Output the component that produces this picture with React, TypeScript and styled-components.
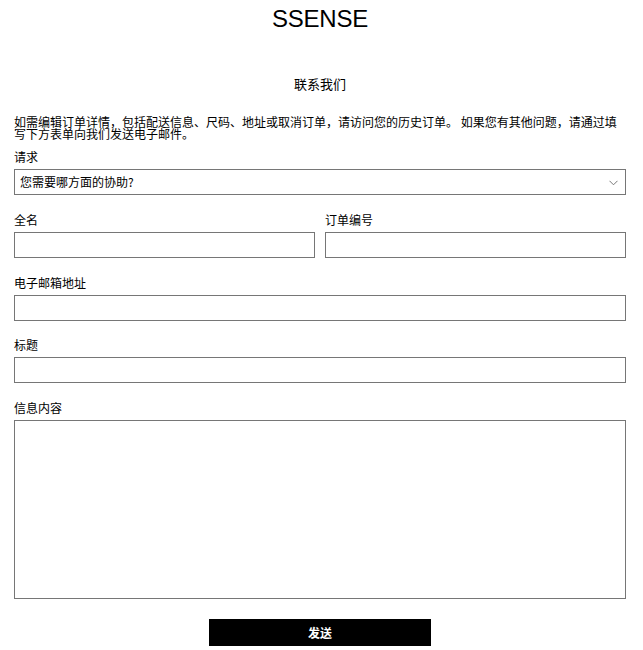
import React from "react";
import styled, { createGlobalStyle } from "styled-components";

const GlobalStyle = createGlobalStyle`
  html, body {
    margin: 0;
    padding: 0;
    background: #ffffff;
  }
  body {
    font-family: "Noto Sans CJK SC", "Liberation Sans", sans-serif;
    color: #000000;
  }
  * { box-sizing: border-box; }
`;

const Page = styled.div`
  width: 612px;
  margin-left: 14px;
  display: flex;
  flex-direction: column;
`;

const Logo = styled.h1`
  margin: 5px 0 0;
  font-family: "Liberation Sans", Arial, sans-serif;
  font-weight: 400;
  font-size: 24px;
  line-height: 28px;
  letter-spacing: -0.2px;
  text-align: center;
`;

const Title = styled.h2`
  margin: 42px 0 0;
  font-size: 13px;
  font-weight: 400;
  line-height: 18px;
  text-align: center;
`;

const Intro = styled.p`
  margin: 23px 0 0;
  font-size: 12px;
  line-height: 12px;
`;

const Form = styled.form`
  display: flex;
  flex-direction: column;
  margin-top: 10px;
`;

const Row = styled.div`
  display: grid;
  grid-template-columns: 1fr 1fr;
  column-gap: 10px;
`;

const Field = styled.div<{ $last?: boolean }>`
  display: flex;
  flex-direction: column;
  margin-bottom: ${(p) => (p.$last ? "20px" : "17.75px")};
`;

const Label = styled.label`
  font-size: 12px;
  line-height: 14px;
  margin-bottom: 5px;
`;

const boxStyles = `
  width: 100%;
  border: 1px solid #767676;
  border-radius: 0;
  background: #ffffff;
  font-family: "Noto Sans CJK SC", "Liberation Sans", sans-serif;
  font-size: 12px;
  color: #000;
  outline: none;
  margin: 0;
`;

const Input = styled.input`
  ${boxStyles}
  height: 26px;
  padding: 0 5px;
`;

const TextArea = styled.textarea`
  ${boxStyles}
  height: 179px;
  padding: 5px;
  resize: none;
  display: block;
`;

const SelectBox = styled.div`
  ${boxStyles}
  height: 26px;
  display: flex;
  align-items: center;
  justify-content: space-between;
  padding: 0 7px 0 5px;
  line-height: 14px;
`;

const Chevron = styled.svg`
  width: 9px;
  height: 6px;
  display: block;
  margin-top: 1px;
`;

const Actions = styled.div`
  display: flex;
  justify-content: center;
`;

const SendButton = styled.button`
  width: 222px;
  height: 27px;
  background: #000;
  color: #fff;
  border: none;
  border-radius: 0;
  font-family: "Noto Sans CJK SC", "Liberation Sans", sans-serif;
  font-size: 12px;
  font-weight: 700;
  cursor: pointer;
  padding: 0;
`;

export default function App() {
  return (
    <>
      <GlobalStyle />
      <Page>
        <Logo>SSENSE</Logo>
        <Title>联系我们</Title>
        <Intro>
          如需编辑订单详情，包括配送信息、尺码、地址或取消订单，请访问您的历史订单。 如果您有其他问题，请通过填写下方表单向我们发送电子邮件。
        </Intro>
        <Form onSubmit={(e) => e.preventDefault()}>
          <Field>
            <Label>请求</Label>
            <SelectBox>
              <span>您需要哪方面的协助?</span>
              <Chevron viewBox="0 0 9 6">
                <path d="M0.5 0.8 L4.5 4.8 L8.5 0.8" fill="none" stroke="#777" strokeWidth="1" />
              </Chevron>
            </SelectBox>
          </Field>
          <Row>
            <Field>
              <Label>全名</Label>
              <Input type="text" />
            </Field>
            <Field>
              <Label>订单编号</Label>
              <Input type="text" />
            </Field>
          </Row>
          <Field>
            <Label>电子邮箱地址</Label>
            <Input type="email" />
          </Field>
          <Field>
            <Label>标题</Label>
            <Input type="text" />
          </Field>
          <Field $last>
            <Label>信息内容</Label>
            <TextArea />
          </Field>
          <Actions>
            <SendButton type="submit">发送</SendButton>
          </Actions>
        </Form>
      </Page>
    </>
  );
}
